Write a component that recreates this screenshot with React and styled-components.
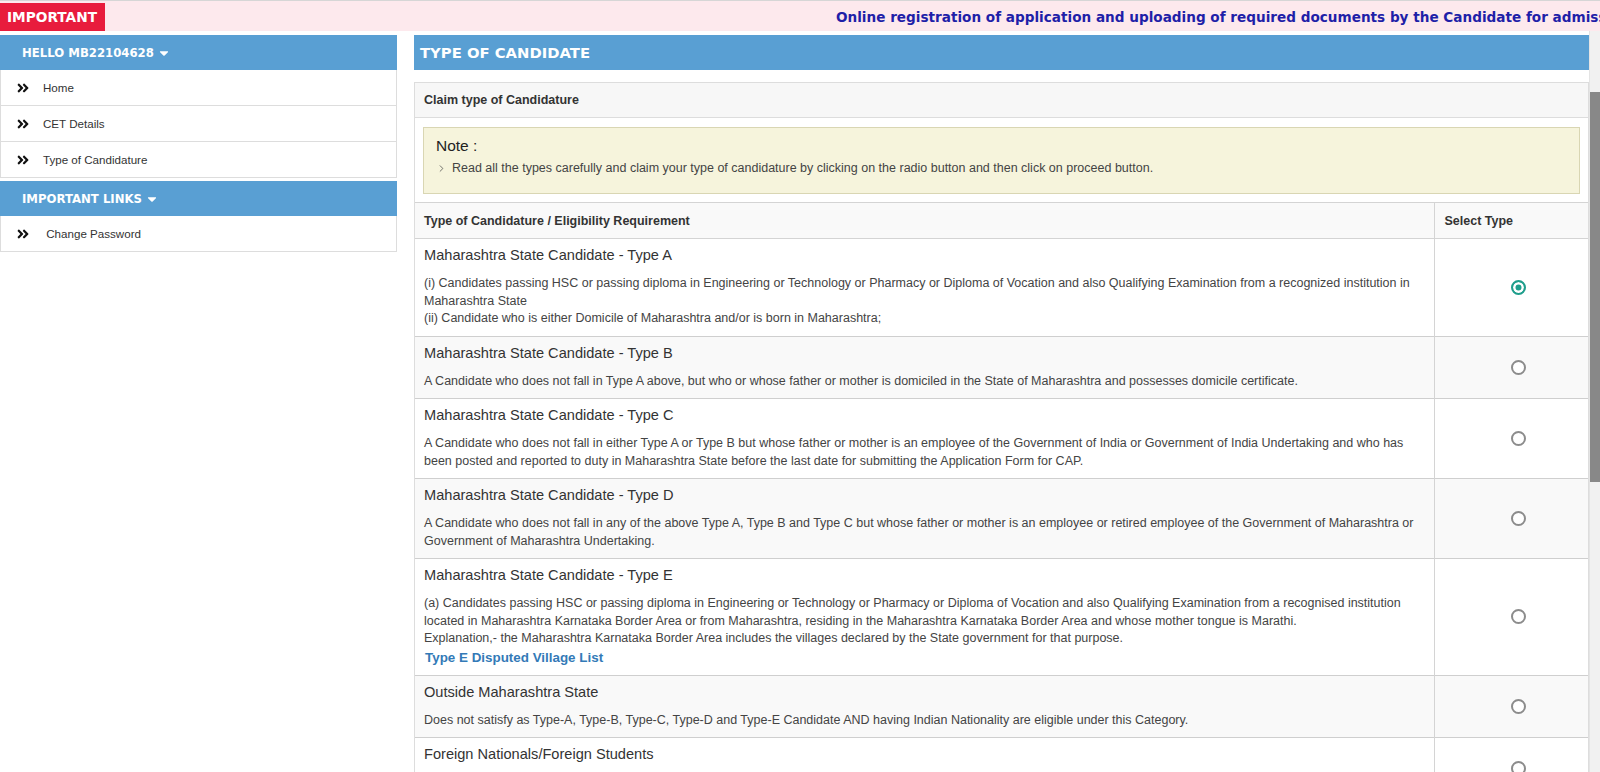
import React from 'react'
import styled, { createGlobalStyle } from 'styled-components'
import { FaAngleDoubleRight, FaCaretDown } from 'react-icons/fa'
import { ChevronRight } from 'lucide-react'

const GlobalStyle = createGlobalStyle`
    html, body {
        margin: 0;
        padding: 0;
        overflow: hidden;
        background: #fff;
        font-family: "Liberation Sans", Arial, sans-serif;
        color: #333;
    }
    * { box-sizing: border-box; }
`;

const Page = styled.div`
    height: 100vh;
    display: flex;
    flex-direction: column;
`;

const TopBar = styled.div`
    height: 31px;
    flex-shrink: 0;
    display: flex;
    align-items: stretch;
    border-top: 1px solid #d6d6d6;
    padding-top: 2px;
    background: #fde9ed;
    overflow: hidden;
`;

const Badge = styled.div`
    display: flex;
    align-items: center;
    padding: 0 8px 0 7px;
    background: #e81c3d;
    color: #fff;
    font-family: "DejaVu Sans", Verdana, sans-serif;
    font-weight: bold;
    font-size: 13.7px;
`;

const Marquee = styled.div`
    flex: 1;
    display: flex;
    align-items: center;
    overflow: hidden;
    white-space: nowrap;
    padding-left: 731px;
`;

const MarqueeText = styled.span`
    font-family: "DejaVu Sans", Verdana, sans-serif;
    font-weight: bold;
    font-size: 13.6px;
    color: #1f1fa8;
`;

const Body = styled.div`
    flex: 1;
    min-height: 0;
    display: flex;
    gap: 17px;
`;

const Sidebar = styled.div`
    width: 397px;
    flex-shrink: 0;
    padding-top: 4px;
`;

const SideHeader = styled.div`
    height: 35px;
    display: flex;
    align-items: center;
    gap: 3px;
    padding-left: 22px;
    margin-top: ${p => (p.$spaced ? '3px' : '0')};
    background: #599fd3;
    color: #fff;
    font-family: "DejaVu Sans", Verdana, sans-serif;
    font-weight: bold;
    font-size: 11.7px;
`;

const SideList = styled.div`
    border-left: 1px solid #ddd;
    border-right: 1px solid #ddd;
`;

const SideItem = styled.div`
    height: 36px;
    display: flex;
    align-items: center;
    gap: 13px;
    padding-left: 15px;
    border-bottom: 1px solid #ddd;
    font-size: 11.6px;
    color: #333;
    background: #fff;

    svg {
        color: #111;
        flex-shrink: 0;
    }
`;

const MainArea = styled.div`
    flex: 1;
    min-width: 0;
    position: relative;
    display: flex;
`;

const Main = styled.div`
    flex: 1;
    min-width: 0;
    overflow-y: auto;
    padding-right: 11px;
    scrollbar-width: none;

    &::-webkit-scrollbar {
        display: none;
    }
`;

/* scroll indicator drawn over the right edge of the scrolling area */
const ScrollTrack = styled.div`
    position: absolute;
    top: 0;
    right: 0;
    bottom: 0;
    width: 11px;
    background: #f1f1f1;
    border-left: 1px solid #e4e4e4;
`;

const ScrollThumb = styled.div`
    margin-top: 61px;
    height: 390px;
    background: #888;
`;

const MainInner = styled.div`
    padding: 4px 0 470px;
`;

const TitleBar = styled.div`
    height: 35px;
    display: flex;
    align-items: center;
    padding-left: 6px;
    background: #599fd3;
    color: #fff;
    font-family: "DejaVu Sans", Verdana, sans-serif;
    font-weight: bold;
    font-size: 14.8px;
`;

const Panel = styled.div`
    margin-top: 12px;
    border: 1px solid #ddd;
    border-bottom: none;
`;

const PanelHeading = styled.div`
    height: 35px;
    display: flex;
    align-items: center;
    padding-left: 9px;
    background: #f7f7f7;
    border-bottom: 1px solid #ddd;
    font-size: 12.5px;
    font-weight: bold;
    color: #333;
`;

const NoteWrap = styled.div`
    padding: 9px 8px 8px 8px;
`;

const NoteBox = styled.div`
    padding: 8px 12px 16px;
    background: #f6f4dc;
    border: 1px solid #d9d6b3;
`;

const NoteTitle = styled.div`
    font-size: 15.5px;
    line-height: 20px;
    margin-bottom: 4px;
    color: #222;
`;

const NoteLine = styled.div`
    display: flex;
    align-items: center;
    gap: 5px;
    font-size: 12.5px;
    line-height: 17px;
    color: #444;

    svg {
        color: #444;
        flex-shrink: 0;
    }
`;

const Table = styled.table`
    width: 100%;
    border-collapse: collapse;
    table-layout: fixed;
`;

const HeadCell = styled.th`
    height: 36px;
    padding: 0 9px 0 ${p => (p.$select ? '10px' : '9px')};
    width: ${p => (p.$select ? '154px' : 'auto')};
    text-align: left;
    font-size: 12.5px;
    font-weight: bold;
    color: #333;
    background: #f9f9f9;
    border-top: 1px solid #d4d4d4;
    border-bottom: 1px solid #d4d4d4;
    border-left: ${p => (p.$select ? '1px solid #d4d4d4' : 'none')};
`;

const Row = styled.tr`
    background: ${p => (p.$odd ? '#f9f9f9' : '#fff')};
    border-bottom: 1px solid #cfcfcf;
`;

const InfoCell = styled.td`
    padding: 6px 9px 8px;
    vertical-align: top;
`;

const RadioCell = styled.td`
    text-align: center;
    vertical-align: middle;
    padding: 4px 0 0 14px;
    border-left: 1px solid #d4d4d4;
`;

const TypeTitle = styled.div`
    font-size: 14.6px;
    line-height: 20px;
    margin-bottom: 10px;
    color: #333;
`;

const Desc = styled.div`
    font-size: 12.5px;
    line-height: 17.5px;
    color: #444;
`;

const DocLink = styled.a`
    display: block;
    font-size: 13.4px;
    font-weight: bold;
    line-height: 19px;
    color: #337ab7;
    text-decoration: none;
    padding-left: 1px;
`;

const Radio = styled.input`
    appearance: none;
    width: 15px;
    height: 15px;
    margin: 0;
    border: 2px solid #8c8c8c;
    border-radius: 50%;
    background: #fff;
    cursor: pointer;

    &:checked {
        border-color: #1f9e8c;
        background: #1f9e8c;
        box-shadow: inset 0 0 0 2.5px #fff;
    }
`;

const Actions = styled.div`
    padding: 16px;
    text-align: center;
    border-bottom: 1px solid #ddd;
`;

const ProceedButton = styled.button`
    padding: 7px 18px;
    border: none;
    border-radius: 3px;
    background: #599fd3;
    color: #fff;
    font-family: "Liberation Sans", Arial, sans-serif;
    font-size: 13px;
    font-weight: bold;
`;

const types = [
    {
        title: 'Maharashtra State Candidate - Type A',
        lines: [
            '(i) Candidates passing HSC or passing diploma in Engineering or Technology or Pharmacy or Diploma of Vocation and also Qualifying Examination from a recognized institution in Maharashtra State',
            '(ii) Candidate who is either Domicile of Maharashtra and/or is born in Maharashtra;',
        ],
    },
    {
        title: 'Maharashtra State Candidate - Type B',
        lines: ['A Candidate who does not fall in Type A above, but who or whose father or mother is domiciled in the State of Maharashtra and possesses domicile certificate.'],
    },
    {
        title: 'Maharashtra State Candidate - Type C',
        lines: ['A Candidate who does not fall in either Type A or Type B but whose father or mother is an employee of the Government of India or Government of India Undertaking and who has been posted and reported to duty in Maharashtra State before the last date for submitting the Application Form for CAP.'],
    },
    {
        title: 'Maharashtra State Candidate - Type D',
        lines: ['A Candidate who does not fall in any of the above Type A, Type B and Type C but whose father or mother is an employee or retired employee of the Government of Maharashtra or Government of Maharashtra Undertaking.'],
    },
    {
        title: 'Maharashtra State Candidate - Type E',
        lines: [
            '(a) Candidates passing HSC or passing diploma in Engineering or Technology or Pharmacy or Diploma of Vocation and also Qualifying Examination from a recognised institution located in Maharashtra Karnataka Border Area or from Maharashtra, residing in the Maharashtra Karnataka Border Area and whose mother tongue is Marathi.',
            'Explanation,- the Maharashtra Karnataka Border Area includes the villages declared by the State government for that purpose.',
        ],
        link: 'Type E Disputed Village List',
    },
    {
        title: 'Outside Maharashtra State',
        lines: ['Does not satisfy as Type-A, Type-B, Type-C, Type-D and Type-E Candidate AND having Indian Nationality are eligible under this Category.'],
    },
    {
        title: 'Foreign Nationals/Foreign Students',
        lines: ['Foreign Nationals, Persons of Indian Origin (PIO), Overseas Citizens of India (OCI) and Children of Indian Workers in Gulf Countries (CIWGC).'],
    },
];

const App = () => {
    const [selected, setSelected] = React.useState(0);

    return (
        <Page>
            <GlobalStyle />
            <TopBar>
                <Badge>IMPORTANT</Badge>
                <Marquee>
                    <MarqueeText>
                        Online registration of application and uploading of required documents by the Candidate for admission to First Year Engineering
                    </MarqueeText>
                </Marquee>
            </TopBar>

            <Body>
                <Sidebar>
                    <SideHeader>HELLO MB22104628 <FaCaretDown size={14} /></SideHeader>
                    <SideList>
                        <SideItem><FaAngleDoubleRight size={14} />Home</SideItem>
                        <SideItem><FaAngleDoubleRight size={14} />CET Details</SideItem>
                        <SideItem><FaAngleDoubleRight size={14} />Type of Candidature</SideItem>
                    </SideList>
                    <SideHeader $spaced>IMPORTANT LINKS <FaCaretDown size={14} /></SideHeader>
                    <SideList>
                        <SideItem><FaAngleDoubleRight size={14} />{'\u00a0'}Change Password</SideItem>
                    </SideList>
                </Sidebar>

                <MainArea>
                    <Main>
                        <MainInner>
                            <TitleBar>TYPE OF CANDIDATE</TitleBar>
                            <Panel>
                                <PanelHeading>Claim type of Candidature</PanelHeading>
                                <NoteWrap>
                                    <NoteBox>
                                        <NoteTitle>Note :</NoteTitle>
                                        <NoteLine>
                                            <ChevronRight size={11} strokeWidth={1.6} />
                                            Read all the types carefully and claim your type of candidature by clicking on the radio button and then click on proceed button.
                                        </NoteLine>
                                    </NoteBox>
                                </NoteWrap>
                                <Table>
                                    <thead>
                                        <tr>
                                            <HeadCell>Type of Candidature / Eligibility Requirement</HeadCell>
                                            <HeadCell $select>Select Type</HeadCell>
                                        </tr>
                                    </thead>
                                    <tbody>
                                        {types.map((t, i) => (
                                            <Row key={t.title} $odd={i % 2 === 1}>
                                                <InfoCell>
                                                    <TypeTitle>{t.title}</TypeTitle>
                                                    <Desc>
                                                        {t.lines.map(l => <div key={l}>{l}</div>)}
                                                    </Desc>
                                                    {t.link && <DocLink href="#">{t.link}</DocLink>}
                                                </InfoCell>
                                                <RadioCell>
                                                    <Radio
                                                        type="radio"
                                                        name="candidature"
                                                        checked={selected === i}
                                                        onChange={() => setSelected(i)}
                                                    />
                                                </RadioCell>
                                            </Row>
                                        ))}
                                    </tbody>
                                </Table>
                                <Actions>
                                    <ProceedButton>Proceed</ProceedButton>
                                </Actions>
                            </Panel>
                        </MainInner>
                    </Main>
                    <ScrollTrack>
                        <ScrollThumb />
                    </ScrollTrack>
                </MainArea>
            </Body>
        </Page>
    )
};

export default App;
